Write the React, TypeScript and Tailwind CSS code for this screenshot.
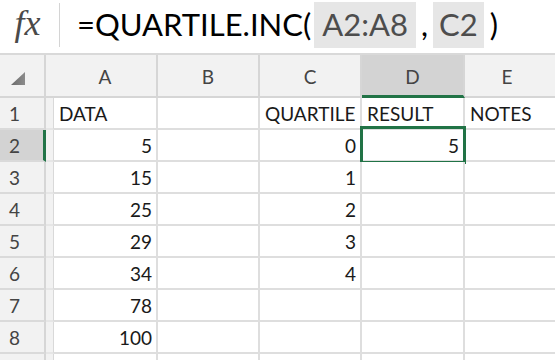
import React from "react";

const GREEN = "#217346";

type Row = { n: number; a?: string; c?: string; d?: string; e?: string; b?: string };

const rows: Row[] = [
  { n: 1, a: "DATA", c: "QUARTILE", d: "RESULT", e: "NOTES" },
  { n: 2, a: "5", c: "0", d: "5" },
  { n: 3, a: "15", c: "1" },
  { n: 4, a: "25", c: "2" },
  { n: 5, a: "29", c: "3" },
  { n: 6, a: "34", c: "4" },
  { n: 7, a: "78" },
  { n: 8, a: "100" },
  { n: 9 },
];

function Cell({
  w,
  text,
  children,
}: {
  w: string;
  text?: string;
  children?: React.ReactNode;
}) {
  const isNum = text !== undefined && /^\d+$/.test(text);
  return (
    <div
      className={`${w} relative h-full shrink-0 border-r-2 border-[#dedede] bg-white flex items-center pt-[3px] ${
        isNum ? "justify-end pr-[4px]" : "justify-start pl-[5px]"
      } overflow-visible whitespace-nowrap text-[19px] text-[#1a1a1a]`}
    >
      {text}
      {children}
    </div>
  );
}

export default function App() {
  return (
    <div
      className="w-[555px] h-[360px] overflow-hidden bg-white"
      style={{ fontFamily: "Lato, 'Open Sans', sans-serif" }}
    >
      {/* Formula bar */}
      <div className="h-[55px] border-b-2 border-[#d9d9d9] flex items-stretch bg-white">
        <div className="w-[59px] shrink-0 flex items-center justify-center pb-[8px] pr-[4px]">
          <span
            className="italic text-[36px] text-[#4a4a4a] leading-none"
            style={{ fontFamily: "'Liberation Serif', serif" }}
          >
            fx
          </span>
        </div>
        <div className="w-[1px] bg-[#d4d4d4] my-[3px] mb-[6px]" />
        <div className="flex items-center pl-[17px] pb-[4px] text-[31px] text-black leading-none whitespace-nowrap">
          <span>=QUARTILE.INC(</span>
          <span className="ml-[3px] bg-[#e6e6e6] text-[#4d4d4d] px-[8px] h-[46px] flex items-center">A2:A8</span>
          <span className="ml-[5px]">,</span>
          <span className="ml-[5px] bg-[#e6e6e6] text-[#4d4d4d] px-[6px] h-[46px] flex items-center">C2</span>
          <span className="ml-[6px]">)</span>
        </div>
      </div>

      {/* Column header row */}
      <div className="h-[43px] flex bg-[#f2f2f2] text-[19px] text-[#444]">
        <div className="w-[46px] shrink-0 border-r-2 border-b-2 border-[#d6d6d6] flex items-end justify-center pb-[10px]">
          <svg width="16" height="14" viewBox="0 0 16 14" className="ml-[-8px]">
            <defs>
              <linearGradient id="tri" x1="0" y1="0" x2="1" y2="0">
                <stop offset="0" stopColor="#6b6b6b" />
                <stop offset="1" stopColor="#8c8c8c" />
              </linearGradient>
            </defs>
            <polygon points="15,0 15,13 1,13" fill="url(#tri)" />
          </svg>
        </div>
        <div className="w-[8px] shrink-0 border-b-2 border-[#d6d6d6]" />
        <div className="w-[104px] shrink-0 border-r-2 border-b-2 border-[#d6d6d6] flex items-center justify-center pt-[4px]">A</div>
        <div className="w-[102px] shrink-0 border-r-2 border-b-2 border-[#d6d6d6] flex items-center justify-center pt-[4px]">B</div>
        <div className="w-[102px] shrink-0 border-r-2 border-b-2 border-[#d6d6d6] flex items-center justify-center pt-[4px]">C</div>
        <div className="w-[103px] shrink-0 border-r-2 border-[#d6d6d6] bg-[#d3d3d3] border-b-[3px] border-b-[#217346] flex items-center justify-center pt-[4px]">D</div>
        <div className="flex-1 border-b-2 border-[#d6d6d6] flex items-center justify-center pt-[4px] pr-[6px]">E</div>
      </div>

      {/* Body rows */}
      {rows.map((r) => {
        const sel = r.n === 2;
        return (
          <div key={r.n} className="h-[32px] flex">
            <div
              className={`w-[46px] shrink-0 border-b-2 border-[#dadada] flex items-center pl-[9px] pt-[3px] text-[19px] text-[#444] ${
                sel ? "bg-[#d3d3d3] border-r-[3px] border-r-[#217346]" : "bg-[#f2f2f2] border-r-2 border-r-[#d6d6d6]"
              }`}
            >
              {r.n <= 8 ? r.n : null}
            </div>
            <div className="w-[8px] shrink-0 bg-[#f2f2f2] border-r border-[#d9d9d9] border-b-2 border-b-[#e6e6e6]" />
            <div className="flex h-full border-b-2 border-[#dedede] flex-1">
              <Cell w="w-[104px]" text={r.a} />
              <Cell w="w-[102px]" text={r.b} />
              <Cell w="w-[102px]" text={r.c} />
              <Cell w="w-[103px]" text={r.d}>
                {sel && (
                  <div
                    className="absolute left-[-2px] top-[-4px] right-[-3px] bottom-[-4px] border-[3px] pointer-events-none"
                    style={{ borderColor: GREEN }}
                  />
                )}
              </Cell>
              <div className="flex-1 h-full bg-white flex items-center pl-[5px] pt-[3px] text-[19px] text-[#1a1a1a] whitespace-nowrap">
                {r.e}
              </div>
            </div>
          </div>
        );
      })}
    </div>
  );
}
